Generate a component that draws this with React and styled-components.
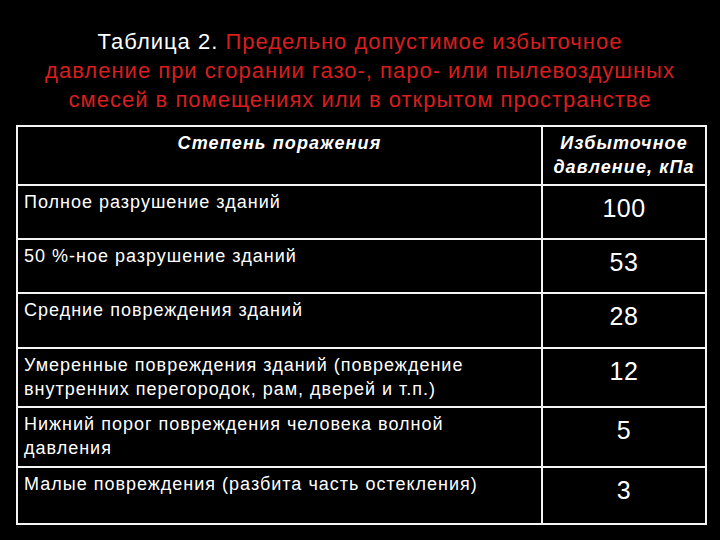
import React from 'react'
import styled, { createGlobalStyle } from 'styled-components'

const GlobalStyle = createGlobalStyle`
  html, body {
    margin: 0;
    background: #000;
  }
  body {
    font-family: "Liberation Sans", Arial, sans-serif;
    color: #fff;
  }
`

const Slide = styled.div`
  width: 720px;
  height: 540px;
  background: #000;
  padding-top: 27px;
  box-sizing: border-box;
  overflow: hidden;
`

const Title = styled.h1`
  margin: 0 0 11px;
  font-weight: normal;
  font-size: 22px;
  line-height: 29px;
  text-align: center;
  letter-spacing: 1px;
  color: #fff;

  span {
    color: #d81e1e;
  }
`

const Grid = styled.div`
  margin-left: 16px;
  width: 691px;
  box-sizing: border-box;
  display: grid;
  grid-template-columns: 523px 1fr;
  grid-template-rows: 57px 52px 52px 53px 57px 58px 55px;
  gap: 2px;
  padding: 2px;
  background: #f4f4f4;
`

const Cell = styled.div`
  background: #000;
  color: #fff;
  padding: 4px 6px 0;
  font-size: 18px;
  line-height: 24px;
  letter-spacing: 1px;
  text-align: ${p => (p.$center ? 'center' : 'left')};
`

const HeadCell = styled(Cell)`
  font-weight: bold;
  font-style: italic;
  letter-spacing: 1.1px;
`

const ValueCell = styled(Cell)`
  font-size: 25px;
  line-height: 30px;
  letter-spacing: 0.5px;
  padding-top: 7px;
  text-align: center;
`

const Label = styled(Cell)`
  white-space: pre-line;
`

const rows = [
  ['Полное разрушение зданий', '100'],
  ['50 %-ное разрушение зданий', '53'],
  ['Средние повреждения зданий', '28'],
  ['Умеренные повреждения зданий (повреждение\nвнутренних перегородок, рам, дверей и т.п.)', '12'],
  ['Нижний порог повреждения человека волной\nдавления', '5'],
  ['Малые повреждения (разбита часть остекления)', '3'],
]

export default function App() {
  return (
    <>
      <GlobalStyle />
      <Slide>
        <Title>
          Таблица 2. <span>Предельно допустимое избыточное<br />
          давление при сгорании газо-, паро- или пылевоздушных<br />
          смесей в помещениях или в открытом пространстве</span>
        </Title>
        <Grid>
          <HeadCell $center>Степень поражения</HeadCell>
          <HeadCell $center>Избыточное<br />давление, кПа</HeadCell>
          {rows.map(([label, value]) => (
            <React.Fragment key={value}>
              <Label>{label}</Label>
              <ValueCell>{value}</ValueCell>
            </React.Fragment>
          ))}
        </Grid>
      </Slide>
    </>
  )
}
